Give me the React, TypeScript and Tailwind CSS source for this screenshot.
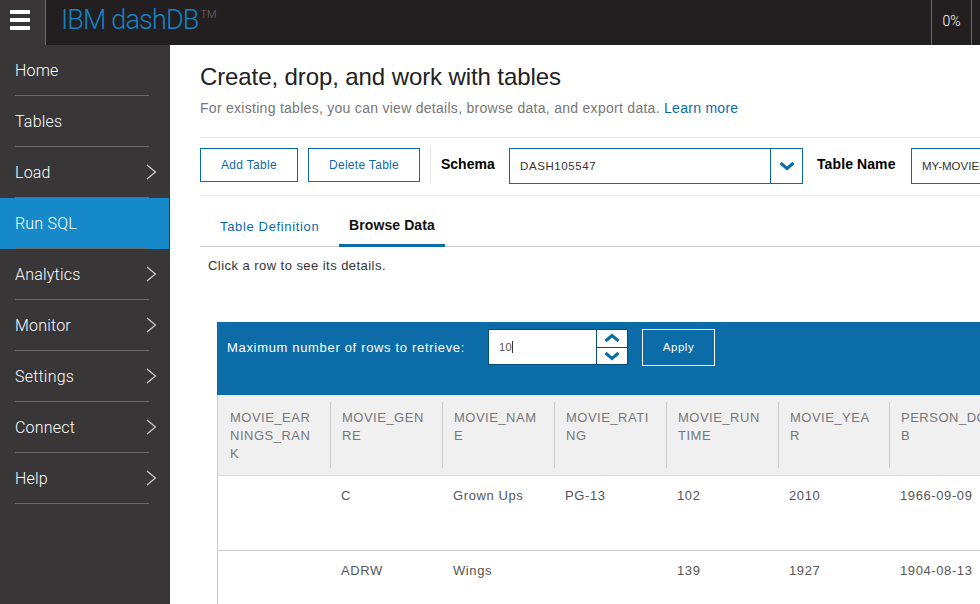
import React from "react";

const nav: { label: string; arrow?: boolean; active?: boolean }[] = [
  { label: "Home" },
  { label: "Tables" },
  { label: "Load", arrow: true },
  { label: "Run SQL", active: true },
  { label: "Analytics", arrow: true },
  { label: "Monitor", arrow: true },
  { label: "Settings", arrow: true },
  { label: "Connect", arrow: true },
  { label: "Help", arrow: true },
];

const columns = [
  "MOVIE_EARNINGS_RANK",
  "MOVIE_GENRE",
  "MOVIE_NAME",
  "MOVIE_RATING",
  "MOVIE_RUNTIME",
  "MOVIE_YEAR",
  "PERSON_DOB",
];

const rows = [
  ["", "C", "Grown Ups", "PG-13", "102", "2010", "1966-09-09"],
  ["", "ADRW", "Wings", "", "139", "1927", "1904-08-13"],
];

const widths = ["w-[113px]", "w-[112px]", "w-[112px]", "w-[112px]", "w-[112px]", "w-[111px]", "w-[112px]"];

function Chevron({ up = false, className = "" }: { up?: boolean; className?: string }) {
  return (
    <svg width="16" height="10" viewBox="0 0 16 10" className={className}>
      <polyline
        points={up ? "1.5,8 8,2.5 14.5,8" : "1.5,2 8,7.5 14.5,2"}
        fill="none"
        stroke="#0b6ca8"
        strokeWidth="3"
      />
    </svg>
  );
}

export default function App() {
  return (
    <div className="flex h-[604px] w-[980px] flex-col overflow-hidden bg-white font-['Liberation_Sans',sans-serif]">
      <header className="flex h-[45px] shrink-0 bg-[#231f20]">
        <div className="flex w-[46px] flex-col justify-center gap-1 border-r border-[#6d6b6c] bg-[#383637] pb-[5px] pl-2.5">
          <div className="h-1 w-5 bg-white" />
          <div className="h-1 w-5 bg-white" />
          <div className="h-1 w-5 bg-white" />
        </div>
        <div className="ml-[15px] flex items-start pt-0.5 font-['Roboto',sans-serif] text-[27px] leading-[36px] font-light tracking-[-0.85px] text-[#1283c4]">
          IBM dashDB
          <span className="mt-[7px] ml-[2px] text-[11px] leading-[11px] tracking-normal text-[#6d6b6c]">TM</span>
        </div>
        <div className="mr-2 ml-auto flex w-[41px] items-center justify-center border-x border-[#6d6b6c] pb-1 font-['Roboto',sans-serif] text-sm font-light text-white">
          0%
        </div>
      </header>

      <div className="flex min-h-0 flex-1">
        <nav className="w-[170px] shrink-0 bg-[#383637]">
          {nav.map((item) => (
            <div key={item.label} className={`h-[51px] ${item.active ? "mr-px bg-[#1589c9]" : ""}`}>
              <div className="mx-[15px] mr-[21px] flex h-[51px] items-center justify-between border-b border-[#6d6b6c] pb-px font-['Roboto',sans-serif] text-base font-light tracking-[0.2px] text-white">
                <span className="pt-0.5">{item.label}</span>
                {item.arrow && (
                  <svg width="11" height="16" viewBox="0 0 11 16" className="-mr-2 mt-px">
                    <polyline points="1,1 9.5,8 1,15" fill="none" stroke="#d8d8d8" strokeWidth="1.1" />
                  </svg>
                )}
              </div>
            </div>
          ))}
        </nav>

        <main className="min-w-0 flex-1 overflow-hidden pt-[17px]">
          <div className="pl-[30px]">
            <h1 className="w-[900px] text-2xl leading-[30px] tracking-[-0.1px] text-[#222]">Create, drop, and work with tables</h1>
            <p className="mt-[7px] text-sm leading-[18px] tracking-[0.28px] text-[#777]">
              For existing tables, you can view details, browse data, and export data.{" "}
              <span className="text-[#0b6ca8]">Learn more</span>
            </p>

            <div className="mt-5 flex h-[59px] w-[900px] items-start border-y border-[#e8e8e8] pt-2.5">
              <button className="h-[34px] w-[98px] shrink-0 border border-[#0b6ca8] text-xs tracking-[0.3px] text-[#0b6ca8]">Add Table</button>
              <button className="ml-2.5 h-[34px] w-[112px] shrink-0 border border-[#0b6ca8] text-xs tracking-[0.3px] text-[#0b6ca8]">Delete Table</button>
              <div className="ml-2.5 h-9 w-px shrink-0 bg-[#e8e8e8]" />
              <span className="ml-2.5 w-[68px] shrink-0 text-sm leading-[33px] font-bold text-black">Schema</span>
              <div className="flex h-9 w-[294px] shrink-0 border border-[#0b6ca8]">
                <span className="flex-1 pl-2.5 text-[11.5px] leading-[34px] tracking-[0.6px] text-[#333]">DASH105547</span>
                <div className="flex w-[32px] items-center justify-center border-l border-[#0b6ca8]">
                  <Chevron />
                </div>
              </div>
              <span className="ml-3.5 w-[94px] shrink-0 text-sm leading-[33px] font-bold tracking-[0.1px] text-black">Table Name</span>
              <div className="h-9 w-[200px] shrink-0 border border-[#0b6ca8] pl-2.5 text-[11.5px] leading-[34px] text-[#333]">
                MY-MOVIES
              </div>
            </div>

            <div className="mt-[11px] flex h-10 w-[900px] border-b border-[#ccc]">
              <div className="w-[139px] pl-5 text-[13px] leading-[40px] tracking-[0.65px] text-[#0b6ca8]">Table Definition</div>
              <div className="h-10 w-[106px] border-b-[3px] border-[#0b6ca8] pl-2.5 text-sm leading-[37px] font-bold tracking-[0.1px] text-[#111]">
                Browse Data
              </div>
            </div>

            <p className="mt-2.5 pl-2 text-[13px] leading-[18px] tracking-[0.45px] text-[#333]">Click a row to see its details.</p>
          </div>

          <div className="mt-[47px] ml-[47px] w-[800px]">
            <div className="flex h-[73px] items-start bg-[#0b6ca8] pt-[7px] pl-2.5">
              <span className="w-[261px] shrink-0 text-[13px] leading-[38px] tracking-[0.67px] text-white">Maximum number of rows to retrieve:</span>
              <div className="flex h-9 w-[140px] shrink-0 border border-[#064d78] bg-white">
                <span className="flex-1 pl-[10px] text-[11px] leading-[34px] tracking-[0.5px] text-[#555]">
                  10<span className="border-l border-[#333]" />
                </span>
                <div className="flex w-[31px] flex-col border-l border-[#064d78]">
                  <div className="flex flex-1 items-center justify-center border-b border-[#064d78]">
                    <Chevron up />
                  </div>
                  <div className="flex flex-1 items-center justify-center">
                    <Chevron />
                  </div>
                </div>
              </div>
              <button className="ml-3.5 h-[37px] w-[73px] shrink-0 border border-white text-[11.5px] tracking-[0.5px] text-white">Apply</button>
            </div>

            <div className="border-l border-[#ccc] text-[13px]">
              <div className="flex h-[81px] border-b border-[#ddd] bg-[#f0f0f0]">
                {columns.map((c, i) => (
                  <div key={c} className={`${widths[i]} shrink-0 pt-[7px]`}>
                    <div
                      className={`h-[66px] pt-[7px] pr-[14px] leading-[18px] tracking-[0.5px] break-all text-[#777] ${i === 0 ? "pl-3" : "pl-[11px]"} ${i < 6 ? "border-r border-[#ccc]" : ""}`}
                    >
                      {c}
                    </div>
                  </div>
                ))}
              </div>
              {rows.map((r) => (
                <div key={r[2]} className="flex h-[75px] border-b border-[#ccc]">
                  {r.map((v, i) => (
                    <div key={i} className={`${widths[i]} shrink-0 pt-[11px] pl-[10px] leading-[18px] tracking-[0.6px] text-[#555]`}>
                      {v}
                    </div>
                  ))}
                </div>
              ))}
            </div>
          </div>
        </main>
      </div>
    </div>
  );
}
